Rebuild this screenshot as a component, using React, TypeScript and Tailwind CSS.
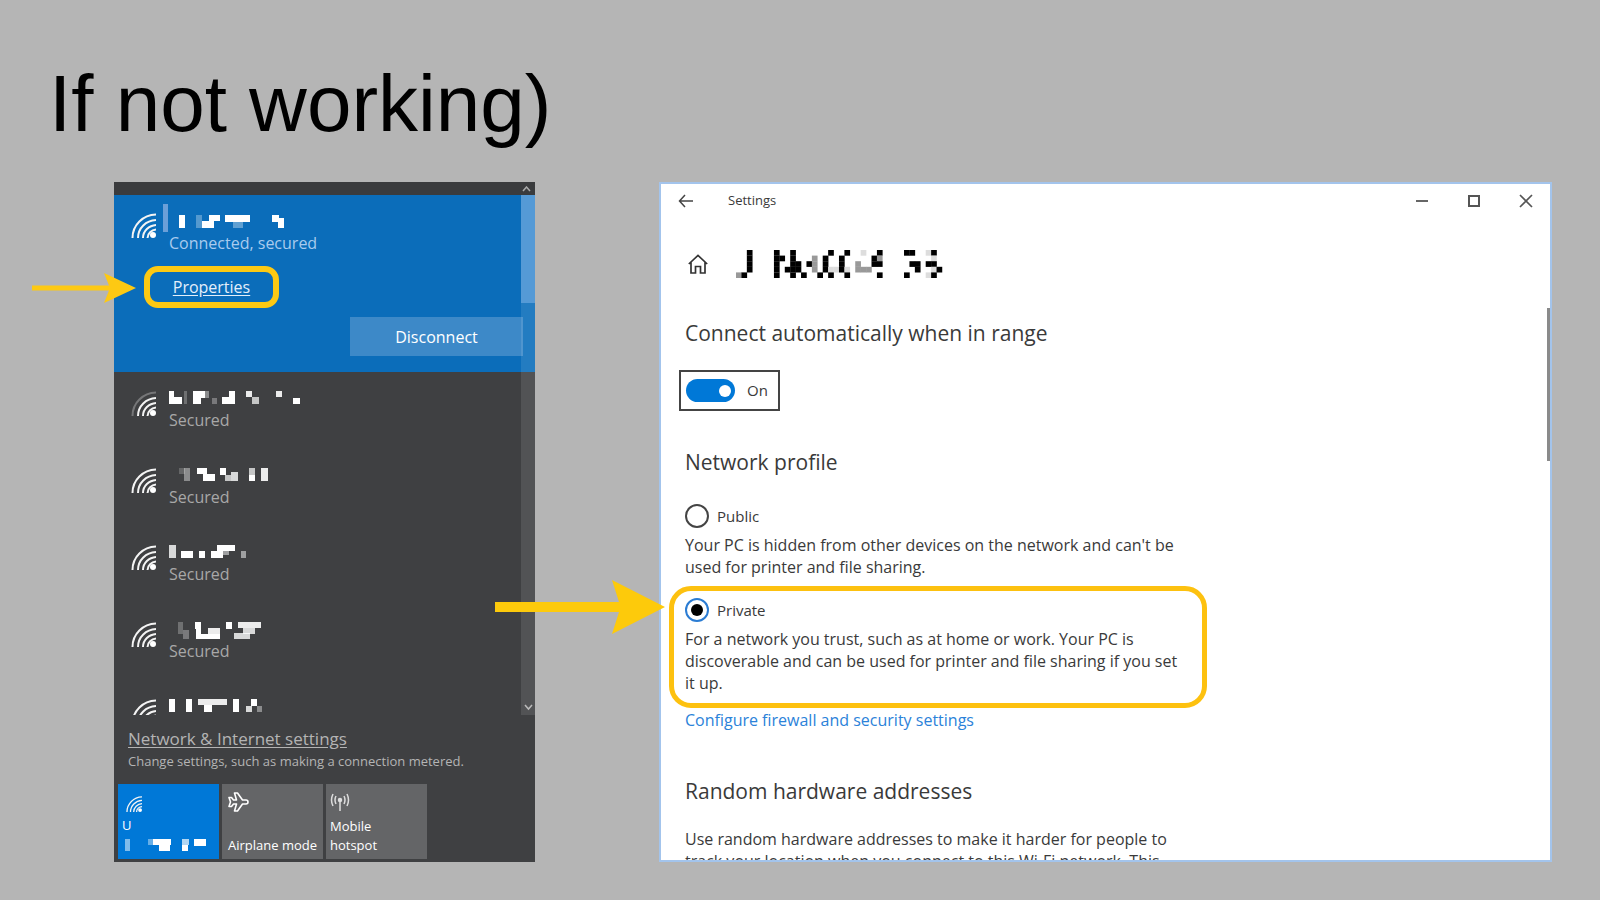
import { useState } from "react";

type Block = [x: number, y: number, w: number, h: number, opacity?: number];

const currentName: Block[] = [
  [10, 0, 6, 13], [27, 0, 6, 13, 0.3], [33, 6, 12, 7], [40, 0, 11, 6], [56, 0, 25, 7], [64, 7, 10, 6, 0.35],
  [103, 0, 7, 7], [109, 3, 6, 10],
];

const networks: { strong: boolean; status?: string; name: Block[] }[] = [
  {
    strong: false,
    status: "Secured",
    name: [
      [0, 0, 5, 13], [5, 6, 8, 7], [15, 0, 3, 13, 0.25], [24, 0, 12, 7], [24, 7, 8, 6], [36, 0, 4, 7, 0.4],
      [43, 7, 5, 6, 0.3], [53, 6, 13, 7], [60, 0, 6, 7], [77, 0, 6, 6, 0.9], [83, 6, 7, 7, 0.7], [107, 0, 6, 6, 0.9],
      [124, 7, 7, 6],
    ],
  },
  {
    strong: true,
    status: "Secured",
    name: [
      [10, 0, 6, 6, 0.2], [15, 0, 6, 13, 0.4], [28, 0, 10, 6], [34, 6, 12, 7], [51, 0, 6, 7], [56, 7, 6, 6, 0.7],
      [62, 4, 7, 9, 0.8], [80, 0, 6, 7, 0.7], [80, 7, 6, 6], [92, 0, 7, 13, 0.9],
    ],
  },
  {
    strong: true,
    status: "Secured",
    name: [
      [0, 0, 7, 13, 0.8], [12, 6, 12, 7], [30, 6, 6, 7], [42, 6, 12, 7], [48, 0, 18, 6], [54, 6, 6, 4, 0.5],
      [72, 6, 5, 7, 0.5],
    ],
  },
  {
    strong: true,
    status: "Secured",
    name: [
      [9, 0, 5, 12, 0.25], [14, 8, 6, 9, 0.3], [26, 0, 6, 7], [27, 7, 5, 10], [32, 12, 19, 5], [39, 6, 12, 6, 0.9],
      [57, 0, 6, 7], [69, 0, 23, 6, 0.9], [74, 6, 12, 6, 0.8], [65, 11, 16, 6, 0.8],
    ],
  },
  {
    strong: true,
    name: [
      [0, 0, 6, 13], [17, 0, 6, 13], [29, 0, 29, 6, 0.9], [35, 6, 8, 7], [64, 0, 6, 13], [77, 7, 6, 6, 0.8],
      [82, 0, 6, 7], [88, 7, 5, 6, 0.4],
    ],
  },
];

const tileName: Block[] = [
  [3, 0, 5, 12, 0.5], [26, 0, 5, 6, 0.4], [31, 0, 18, 6], [37, 6, 11, 6], [60, 0, 7, 6, 0.7], [60, 6, 6, 6],
  [72, 0, 12, 7],
];

const titleBitmap = [
  "  #    #  #      #  #  .  #    ##  .#  ",
  "  #    ## #   + #  #     #+         .  ",
  "  #    #  ## #+ #  #  +  ##     ## ##  ",
  "  #    # ###  + #..#. +++        #  .# ",
  "+#     #  # #  # #  #     #    #   .#  ",
];

function Mosaic({ blocks, label }: { blocks: Block[]; label: string }) {
  return (
    <svg className="block" width={140} height={18} role="img" aria-label={label}>
      {blocks.map(([x, y, w, h, opacity = 1], i) => (
        <rect key={i} x={x} y={y} width={w} height={h} fill="#fff" opacity={opacity} />
      ))}
    </svg>
  );
}

function TitleMosaic() {
  const tone: Record<string, string> = { "#": "#000", "+": "#999", ".": "#ddd" };
  return (
    <svg className="block" width={215} height={28} role="img" aria-label="Hidden network name">
      {titleBitmap.flatMap((row, y) =>
        [...row].map((c, x) =>
          tone[c] ? <rect key={`${x}-${y}`} x={x * 5.42} y={y * 5.6} width={5.7} height={5.7} fill={tone[c]} /> : null,
        ),
      )}
    </svg>
  );
}

function WifiIcon({ size = 25, strong = true }: { size?: number; strong?: boolean }) {
  return (
    <svg width={size} height={size} viewBox="0 0 25 25" fill="none" stroke="#f4f4f4" strokeWidth="2" className="block shrink-0">
      <path d="M1.5 25C1.500 12 12 1.800 25 1.500" opacity={strong ? 1 : 0.3} />
      <path d="M7 25C7 15 15 7.500 25 7" />
      <path d="M12 25C12 18 18 12.500 25 12" />
      <path d="M16.500 25C16.500 20.500 20.500 17 25 16.500" />
      <circle cx="22" cy="22" r="3" fill="#fff" stroke="none" />
    </svg>
  );
}

function NetworkFlyout() {
  return (
    <section aria-label="Networks" className="flex w-[421px] shrink-0 flex-col bg-[#3f4042] text-white">
      <div className="flex h-[13px] shrink-0 items-center justify-end bg-[#3a3b3d] pr-1">
        <svg width="9" height="6" viewBox="0 0 9 6" fill="none" stroke="#aaa" strokeWidth="1.5">
          <path d="M1 5l3.500-4L8 5" />
        </svg>
      </div>

      <div className="relative min-h-0 flex-1 overflow-x-visible overflow-y-clip">
        <div className="h-[177px] bg-[#0b6dba]">
          <div className="flex pt-[9px] pl-[17px]">
            <div className="pt-[9px]">
              <WifiIcon />
            </div>
            <div className="ml-[7px] h-7 w-[5px] bg-[#6b9fd8]" />
            <div className="ml-px pt-[11px]">
              <Mosaic blocks={currentName} label="Hidden network name" />
              <p className="text-base leading-5 text-[#a9cbee]">Connected, secured</p>
            </div>
          </div>
          <div className="relative mt-[13px] ml-[30px] flex h-[42px] w-[135px] items-center justify-center rounded-[14px] border-[6px] border-[#fdc913]">
            <a href="#properties" className="text-base leading-5 text-[#e4effa] underline underline-offset-2">
              Properties
            </a>
            <svg className="absolute top-0 -left-[118px]" width="104" height="32" viewBox="0 0 104 32" fill="#fdc913">
              <path d="M0 13.500h77L72 1l32 15-32 15 5-12.500H0z" />
            </svg>
          </div>
          <div className="mt-[9px] flex justify-end pr-3">
            <button type="button" className="h-[39px] w-[173px] bg-[#3d89c8] text-base text-white">
              Disconnect
            </button>
          </div>
        </div>

        <ul>
          {networks.map((n, i) => (
            <li key={i} className="flex h-[77px] gap-[13px] pt-[19px] pl-[17px]">
              <WifiIcon strong={n.strong} />
              <div>
                <Mosaic blocks={n.name} label="Hidden network name" />
                {n.status && <p className="mt-px text-base leading-5 text-[#a8a8a8]">{n.status}</p>}
              </div>
            </li>
          ))}
        </ul>

        <div className="absolute inset-y-0 right-0 flex w-[14px] flex-col items-center justify-end bg-white/10 pb-1">
          <div className="absolute inset-x-0 top-0 h-[108px] bg-[#559ad6]" />
          <svg width="9" height="9" viewBox="0 0 9 9" fill="none" stroke="#bbb" strokeWidth="1.5">
            <path d="M1 3l3.500 4L8 3" />
          </svg>
        </div>
      </div>

      <div className="shrink-0 pt-3 pl-[14px] text-[#b4b4b4]">
        <a href="#settings" className="block text-[17px] leading-6 underline underline-offset-2">
          Network &amp; Internet settings
        </a>
        <p className="text-[13px] leading-5">Change settings, such as making a connection metered.</p>
      </div>

      <div className="mt-[13px] flex h-[78px] shrink-0 gap-[3px] pb-[3px] pl-1 text-[13px] leading-[19px]">
        <button type="button" className="flex w-[101px] flex-col items-start bg-[#0078d7] pt-3 pl-1 text-left">
          <span className="pl-1">
            <WifiIcon size={16} />
          </span>
          <span className="mt-1">U</span>
          <span className="mt-1 h-3 w-24 overflow-hidden">
            <Mosaic blocks={tileName} label="Hidden network name" />
          </span>
        </button>
        <button type="button" className="flex w-[101px] flex-col items-start justify-between bg-[#646567] pt-2 pb-1 pl-1.5 text-left">
          <svg width="21" height="20" viewBox="0 0 21 20" fill="none" stroke="#fff" strokeWidth="1.6" strokeLinejoin="round">
            <path d="M1 5.500h2.500l2 2.500h3L6.500 1h3l5 7H18a2 2 0 0 1 0 4h-3.500l-5 7h-3l2-7h-3l-2 2.500H1L2.500 10z" />
          </svg>
          <span className="whitespace-nowrap">Airplane mode</span>
        </button>
        <button type="button" className="flex w-[101px] flex-col items-start justify-between bg-[#646567] pt-2 pb-1 pl-1 text-left">
          <svg width="20" height="20" viewBox="0 0 20 20" fill="none" stroke="#ddd" strokeWidth="1.5">
            <path d="M3 2c-2 4-2 8 0 12M6 4c-1.500 3-1.500 5 0 8M17 2c2 4 2 8 0 12M14 4c1.500 3 1.500 5 0 8M10 9v10" />
            <circle cx="10" cy="8" r="1.500" fill="#ddd" />
          </svg>
          <span>
            Mobile
            <br />
            hotspot
          </span>
        </button>
      </div>
    </section>
  );
}

function ProfileOption(props: { label: string; text: string; checked: boolean; onSelect: () => void }) {
  return (
    <div>
      <label className="flex h-6 items-center gap-2 text-[15px]">
        <input
          type="radio"
          name="profile"
          checked={props.checked}
          onChange={props.onSelect}
          className="peer sr-only"
        />
        <span className="flex size-6 items-center justify-center rounded-full border-2 border-[#444] peer-checked:border-[#2b7cd3] peer-checked:*:block">
          <span className="hidden size-3 rounded-full bg-black" />
        </span>
        {props.label}
      </label>
      <p className="mt-1.5 w-[495px] text-base leading-[22px]">{props.text}</p>
    </div>
  );
}

function SettingsWindow() {
  const [on, setOn] = useState(true);
  const [profile, setProfile] = useState("private");
  return (
    <section aria-label="Settings" className="relative flex min-w-0 flex-1 flex-col border-2 border-[#a3c4ec] bg-white text-[#3a3a3a]">
      <header className="flex h-[34px] shrink-0 items-center pr-[17px] pl-[17px]">
        <button type="button" aria-label="Back">
          <svg width="16" height="14" viewBox="0 0 16 14" fill="none" stroke="#444" strokeWidth="1.5">
            <path d="M15 7H1.500M7 1L1.500 7 7 13" />
          </svg>
        </button>
        <span className="ml-[34px] text-[13px]">Settings</span>
        <div className="ml-auto flex gap-[38px]">
          <button type="button" aria-label="Minimize">
            <svg width="14" height="14" stroke="#666" strokeWidth="2"><path d="M1 7h12" /></svg>
          </button>
          <button type="button" aria-label="Maximize">
            <svg width="14" height="14" fill="none" stroke="#555" strokeWidth="2"><path d="M2 2h10v10H2z" /></svg>
          </button>
          <button type="button" aria-label="Close">
            <svg width="14" height="14" stroke="#555" strokeWidth="1.700"><path d="M1 1l12 12M13 1L1 13" /></svg>
          </button>
        </div>
      </header>

      <div className="min-h-0 flex-1 overflow-x-visible overflow-y-clip pt-8 pl-6">
        <div className="flex h-7 items-center pl-[3px]">
          <svg width="20" height="20" viewBox="0 0 20 20" fill="none" stroke="#333" strokeWidth="1.700">
            <path d="M.8 10L10 1.500l9.200 8.500M3 8.500V19h4.500v-6.500h5V19H17V8.500" />
          </svg>
          <h2 className="ml-[28px]">
            <TitleMosaic />
          </h2>
        </div>

        <h3 className="mt-[41px] text-[21px] leading-7">Connect automatically when in range</h3>
        <button
          type="button"
          role="switch"
          aria-checked={on}
          onClick={() => setOn(!on)}
          className="mt-[23px] -ml-1.5 flex h-[41px] w-[101px] items-center gap-3 border-2 border-[#444] px-[5px] text-[15px]"
        >
          <span className={on ? "flex h-[23px] w-[49px] items-center justify-end rounded-full bg-[#0078d7] px-1" : "flex h-[23px] w-[49px] items-center rounded-full bg-[#777] px-1"}>
            <span className="size-3 rounded-full bg-white" />
          </span>
          {on ? "On" : "Off"}
        </button>

        <h3 className="mt-[37px] text-[21px] leading-7">Network profile</h3>
        <div className="mt-7">
          <ProfileOption
            label="Public"
            text="Your PC is hidden from other devices on the network and can't be used for printer and file sharing."
            checked={profile === "public"}
            onSelect={() => setProfile("public")}
          />
        </div>
        <div className="relative mt-2 -ml-4 h-[122px] w-[538px] rounded-[22px] border-[5px] border-[#fdc10f] pt-[7px] pl-[11px]">
          <ProfileOption
            label="Private"
            text="For a network you trust, such as at home or work. Your PC is discoverable and can be used for printer and file sharing if you set it up."
            checked={profile === "private"}
            onSelect={() => setProfile("private")}
          />
          <svg className="absolute -top-[11px] -left-[179px]" width="170" height="54" viewBox="0 0 170 54" fill="#fdca0b">
            <path d="M0 22h124L117 0l53 27-53 27 7-22H0z" />
          </svg>
        </div>
        <a href="#firewall" className="mt-px block text-base leading-[22px] text-[#2b82d9]">
          Configure firewall and security settings
        </a>

        <h3 className="mt-[46px] text-[21px] leading-7">Random hardware addresses</h3>
        <p className="mt-[23px] w-[495px] text-base leading-[22px]">
          Use random hardware addresses to make it harder for people to track your location when you connect to this
          Wi-Fi network. This
        </p>
      </div>
      <div className="absolute top-[124px] right-0 h-[153px] w-[3px] bg-[#8a8a8a]" />
    </section>
  );
}

export default function App() {
  return (
    <main className="flex h-screen min-h-[900px] flex-col bg-[#b5b5b5] pt-16 pb-[38px] font-['Open_Sans',sans-serif]">
      <h1 className="pl-[49px] font-['Liberation_Sans',sans-serif] text-[80px] leading-[80px] text-black">
        If not working)
      </h1>
      <div className="mt-[38px] flex min-h-0 flex-1 gap-[124px] pr-12 pl-[114px]">
        <NetworkFlyout />
        <SettingsWindow />
      </div>
    </main>
  );
}
